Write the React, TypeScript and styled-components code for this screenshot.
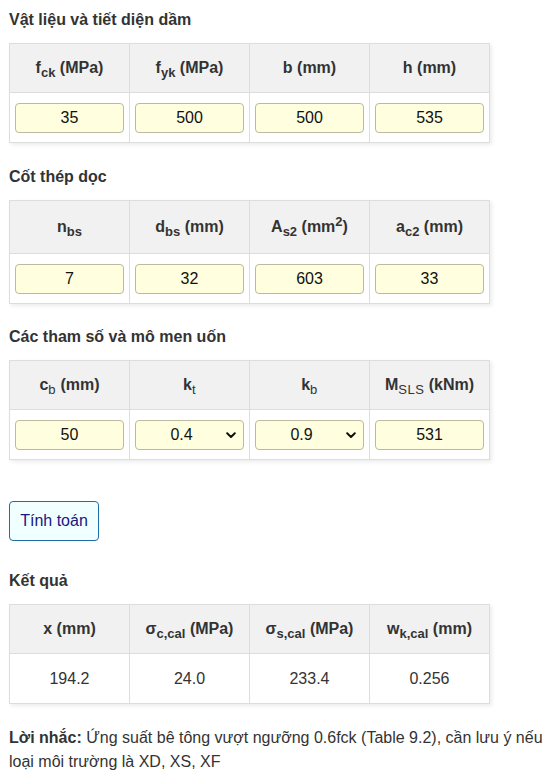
import React from "react";
import styled, { createGlobalStyle } from "styled-components";

const GlobalStyle = createGlobalStyle`
  html, body {
    margin: 0;
    padding: 0;
    background: #ffffff;
  }
  body {
    font-family: "Liberation Sans", Arial, sans-serif;
    font-size: 16px;
    color: #333333;
  }
`;

const Page = styled.div`
  padding: 11px 9px 12px 9px;
  display: flex;
  flex-direction: column;
  align-items: flex-start;
`;

const SectionTitle = styled.h3<{ $gap: number }>`
  margin: ${(p) => p.$gap}px 0 14px 0;
  font-size: 16px;
  line-height: 18px;
  font-weight: bold;
  color: #333333;
`;

const Table = styled.table`
  border-collapse: collapse;
  table-layout: fixed;
  width: 481px;
  box-shadow: 2px 2px 4px rgba(0, 0, 0, 0.08);
`;

const HeadRow = styled.tr<{ $tall?: boolean }>`
  & > th {
    height: ${(p) => (p.$tall ? 52 : 48)}px;
  }
`;

const HeadCell = styled.th`
  padding: 0 4px;
  background: #f1f1f1;
  border: 1px solid #dddddd;
  font-size: 16px;
  line-height: 18px;
  font-weight: bold;
  color: #333333;
  text-align: center;
  vertical-align: middle;
`;

const Sub = styled.sub<{ $light?: boolean }>`
  font-size: 13px;
  font-weight: ${(p) => (p.$light ? "normal" : "bold")};
  letter-spacing: ${(p) => (p.$light ? "0.5px" : "0")};
  vertical-align: sub;
  line-height: 0;
`;

const Sup = styled.sup`
  font-size: 13px;
  vertical-align: super;
  line-height: 0;
`;

const BodyCell = styled.td`
  height: 49px;
  padding: 0 5px;
  border: 1px solid #dddddd;
  background: #ffffff;
  text-align: center;
  vertical-align: middle;
  font-size: 16px;
  color: #333333;
`;

const NumberInput = styled.input`
  box-sizing: border-box;
  display: block;
  width: 100%;
  height: 30px;
  padding: 0 4px;
  border: 1px solid #bdb99e;
  border-radius: 4px;
  background: #ffffe0;
  font-family: "Liberation Sans", Arial, sans-serif;
  font-size: 16px;
  color: #111111;
  text-align: center;
  outline: none;
`;

const SelectWrap = styled.div`
  position: relative;
  width: 100%;
`;

const Select = styled.select`
  box-sizing: border-box;
  display: block;
  width: 100%;
  height: 30px;
  padding: 0 20px 0 4px;
  border: 1px solid #bdb99e;
  border-radius: 4px;
  background: #ffffe0;
  font-family: "Liberation Sans", Arial, sans-serif;
  font-size: 16px;
  color: #111111;
  text-align: center;
  text-align-last: center;
  appearance: none;
  -webkit-appearance: none;
  outline: none;
`;

const Chevron = styled.svg`
  position: absolute;
  right: 8px;
  top: 12px;
  width: 10px;
  height: 7px;
  pointer-events: none;
`;

const CalcButton = styled.button`
  margin-top: 41px;
  width: 90px;
  height: 40px;
  padding: 0;
  border: 1px solid #1f6ea3;
  border-radius: 4px;
  background: #f0ffff;
  font-family: "Liberation Sans", Arial, sans-serif;
  font-size: 16px;
  color: #1c1482;
  cursor: pointer;
`;

const Note = styled.p`
  width: 540px;
  margin: 22px 0 0 0;
  font-size: 16px;
  line-height: 24px;
  color: #333333;
`;

type Option = { value: string };

const Dropdown: React.FC<{ value: string; options: Option[] }> = ({ value, options }) => (
  <SelectWrap>
    <Select defaultValue={value}>
      {options.map((o) => (
        <option key={o.value} value={o.value}>
          {o.value}
        </option>
      ))}
    </Select>
    <Chevron viewBox="0 0 10 7">
      <path d="M1.2 1.2 L5 5 L8.8 1.2" fill="none" stroke="#111" strokeWidth="2" strokeLinecap="round" strokeLinejoin="round" />
    </Chevron>
  </SelectWrap>
);

export default function App() {
  return (
    <>
      <GlobalStyle />
      <Page>
        <SectionTitle $gap={0}>Vật liệu và tiết diện dầm</SectionTitle>
        <Table>
          <thead>
            <HeadRow>
              <HeadCell>
                f<Sub>ck</Sub> (MPa)
              </HeadCell>
              <HeadCell>
                f<Sub>yk</Sub> (MPa)
              </HeadCell>
              <HeadCell>b (mm)</HeadCell>
              <HeadCell>h (mm)</HeadCell>
            </HeadRow>
          </thead>
          <tbody>
            <tr>
              <BodyCell><NumberInput defaultValue="35" /></BodyCell>
              <BodyCell><NumberInput defaultValue="500" /></BodyCell>
              <BodyCell><NumberInput defaultValue="500" /></BodyCell>
              <BodyCell><NumberInput defaultValue="535" /></BodyCell>
            </tr>
          </tbody>
        </Table>

        <SectionTitle $gap={25}>Cốt thép dọc</SectionTitle>
        <Table>
          <thead>
            <HeadRow $tall>
              <HeadCell>
                n<Sub>bs</Sub>
              </HeadCell>
              <HeadCell>
                d<Sub>bs</Sub> (mm)
              </HeadCell>
              <HeadCell>
                A<Sub>s2</Sub> (mm<Sup>2</Sup>)
              </HeadCell>
              <HeadCell>
                a<Sub>c2</Sub> (mm)
              </HeadCell>
            </HeadRow>
          </thead>
          <tbody>
            <tr>
              <BodyCell><NumberInput defaultValue="7" /></BodyCell>
              <BodyCell><NumberInput defaultValue="32" /></BodyCell>
              <BodyCell><NumberInput defaultValue="603" /></BodyCell>
              <BodyCell><NumberInput defaultValue="33" /></BodyCell>
            </tr>
          </tbody>
        </Table>

        <SectionTitle $gap={24}>Các tham số và mô men uốn</SectionTitle>
        <Table>
          <thead>
            <HeadRow>
              <HeadCell>
                c<Sub $light>b</Sub> (mm)
              </HeadCell>
              <HeadCell>
                k<Sub $light>t</Sub>
              </HeadCell>
              <HeadCell>
                k<Sub $light>b</Sub>
              </HeadCell>
              <HeadCell>
                M<Sub $light>SLS</Sub> (kNm)
              </HeadCell>
            </HeadRow>
          </thead>
          <tbody>
            <tr>
              <BodyCell><NumberInput defaultValue="50" /></BodyCell>
              <BodyCell>
                <Dropdown value="0.4" options={[{ value: "0.4" }, { value: "0.6" }]} />
              </BodyCell>
              <BodyCell>
                <Dropdown value="0.9" options={[{ value: "0.9" }, { value: "1.0" }, { value: "1.1" }]} />
              </BodyCell>
              <BodyCell><NumberInput defaultValue="531" /></BodyCell>
            </tr>
          </tbody>
        </Table>

        <CalcButton type="button">Tính toán</CalcButton>

        <SectionTitle $gap={31}>Kết quả</SectionTitle>
        <Table>
          <thead>
            <HeadRow>
              <HeadCell>x (mm)</HeadCell>
              <HeadCell>
                σ<Sub>c,cal</Sub> (MPa)
              </HeadCell>
              <HeadCell>
                σ<Sub>s,cal</Sub> (MPa)
              </HeadCell>
              <HeadCell>
                w<Sub>k,cal</Sub> (mm)
              </HeadCell>
            </HeadRow>
          </thead>
          <tbody>
            <tr>
              <BodyCell>194.2</BodyCell>
              <BodyCell>24.0</BodyCell>
              <BodyCell>233.4</BodyCell>
              <BodyCell>0.256</BodyCell>
            </tr>
          </tbody>
        </Table>

        <Note>
          <strong>Lời nhắc:</strong> Ứng suất bê tông vượt ngưỡng 0.6fck (Table 9.2), cần lưu ý nếu loại môi
          trường là XD, XS, XF
        </Note>
      </Page>
    </>
  );
}
